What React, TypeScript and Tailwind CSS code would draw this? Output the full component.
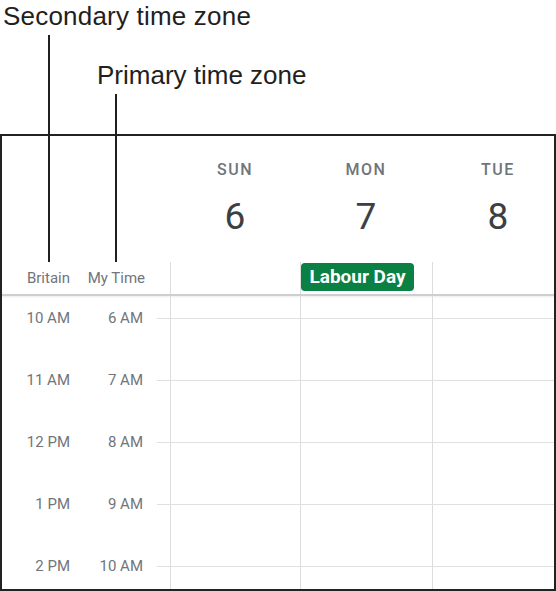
const days = [
  { name: 'SUN', date: '6' },
  { name: 'MON', date: '7' },
  { name: 'TUE', date: '8' },
]

const hours = [
  { uk: '10 AM', mine: '6 AM' },
  { uk: '11 AM', mine: '7 AM' },
  { uk: '12 PM', mine: '8 AM' },
  { uk: '1 PM', mine: '9 AM' },
  { uk: '2 PM', mine: '10 AM' },
]

function DayCells({ height }: { height: string }) {
  return (
    <div className={`grid grid-cols-[13px_130px_132px_132px] ${height}`}>
      <div />
      <div className="border-l border-[#dadce0]" />
      <div className="border-l border-[#dadce0]" />
      <div className="border-l border-[#dadce0]" />
    </div>
  )
}

export default function App() {
  return (
    <div className="relative w-[556px] h-[591px] overflow-hidden bg-white">
      {/* Callout labels */}
      <div className="pt-px font-['Liberation_Sans',Arial,sans-serif] text-[26px] leading-[30px] text-[#231f20]">
        <p className="pl-[3px] tracking-[0.2px]">Secondary time zone</p>
        <p className="pl-[97px] mt-[29px]">Primary time zone</p>
      </div>

      {/* Calendar frame */}
      <div className="mt-[44px] h-[457px] border-2 border-[#222] overflow-hidden font-['Roboto',sans-serif]">
        {/* Day headings */}
        <div className="grid grid-cols-[168px_130px_132px_132px] h-[126px]">
          <div />
          {days.map((d) => (
            <div key={d.name} className="flex flex-col items-center pt-[24px]">
              <span className="text-[16px] leading-[20px] font-medium tracking-[1.5px] text-[#70757a]">{d.name}</span>
              <span className="mt-[17px] text-[37px] leading-[40px] text-[#3c4043]">{d.date}</span>
            </div>
          ))}
        </div>

        {/* All-day row */}
        <div className="grid grid-cols-[168px_130px_132px_132px] h-[32px]">
          <div className="flex items-center text-[15px] leading-[18px] text-[#70757a]">
            <span className="w-[68px] text-right">Britain</span>
            <span className="w-[75px] text-right">My Time</span>
          </div>
          <div className="border-l border-[#dadce0]" />
          <div className="border-l border-[#dadce0]">
            <div className="mt-px flex h-[28px] w-[113px] items-center justify-center rounded-[4px] bg-[#0b8043] text-[19px] font-bold text-white">
              Labour Day
            </div>
          </div>
          <div className="border-l border-[#dadce0]" />
        </div>
        <div className="h-[2px] bg-[#cfcfcf] shadow-[0_1px_2px_rgba(0,0,0,0.08)]" />

        {/* Hours grid */}
        <div className="flex">
          <div className="w-[155px] shrink-0" />
          <div className="flex-1">
            <DayCells height="h-[22px]" />
          </div>
        </div>
        {hours.map((h) => (
          <div key={h.uk} className="flex">
            <div className="flex w-[155px] shrink-0 items-start text-[15px] leading-[18px] text-[#70757a]">
              <span className="-mt-[9px] w-[68px] text-right">{h.uk}</span>
              <span className="-mt-[9px] w-[73px] text-right">{h.mine}</span>
            </div>
            <div className="flex-1 border-t border-[#e0e0e0]">
              <DayCells height="h-[61px]" />
            </div>
          </div>
        ))}
      </div>

      {/* Leader lines */}
      <div className="absolute left-[48px] top-[35px] z-10 h-[227px] w-[2px] bg-[#231f20]" />
      <div className="absolute left-[115px] top-[94px] z-10 h-[168px] w-[2px] bg-[#231f20]" />
    </div>
  )
}
